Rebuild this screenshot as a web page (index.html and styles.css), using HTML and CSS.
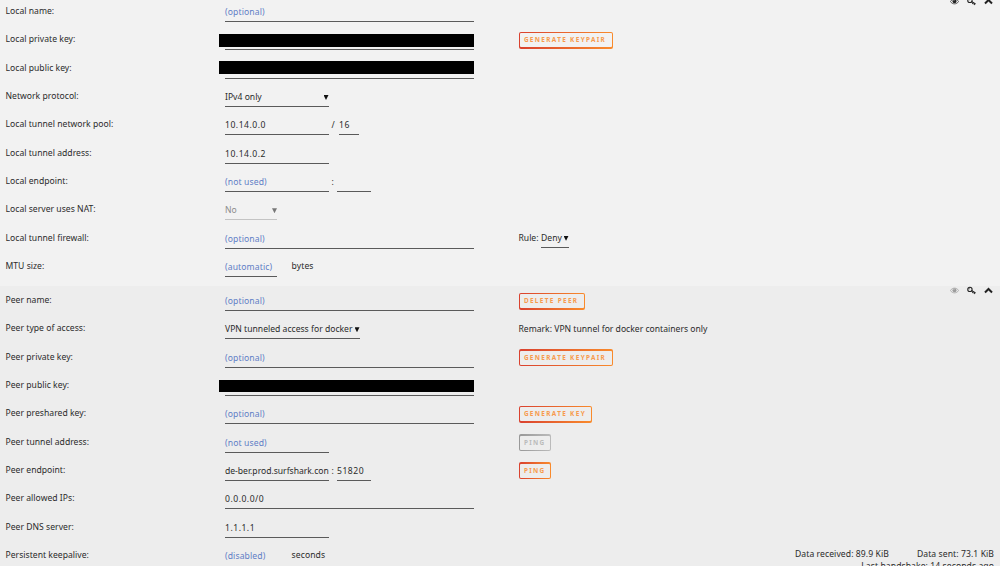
FILE: index.html
```
<!DOCTYPE html>
<html lang="en">
<head>
<meta charset="UTF-8">
<meta name="viewport" content="width=device-width, initial-scale=1.0">
<title>VPN Manager</title>
<link rel="stylesheet" href="styles.css">
</head>
<body>
    <svg class="defs" width="0" height="0">
        <symbol id="eye" viewBox="0 0 20 14">
            <path d="M1 7C5 0 15 0 19 7C15 14 5 14 1 7Z" fill="none" stroke="currentColor" stroke-width="1.6"/>
            <circle cx="10" cy="6.5" r="4.4" fill="currentColor"/>
            <path d="M8 6A2 2 0 0 1 10 4" fill="none" stroke="#eee" stroke-width="1"/>
        </symbol>
        <symbol id="key" viewBox="0 0 20 18">
            <circle cx="6.5" cy="6.5" r="4.8" fill="none" stroke="currentColor" stroke-width="2.4"/>
            <circle cx="4.8" cy="5" r="1.2" fill="currentColor"/>
            <path d="M10 9L19 14.5M14 11.5L12 14.5M17.5 13.5L15.5 17" fill="none" stroke="currentColor" stroke-width="2.4"/>
        </symbol>
        <symbol id="chevron" viewBox="0 0 18 14">
            <path d="M2 11L9 4L16 11" fill="none" stroke="currentColor" stroke-width="4"/>
        </symbol>
    </svg>

    <section class="local">
        <div class="icons">
            <svg class="eye"><use href="#eye"/></svg>
            <svg class="key"><use href="#key"/></svg>
            <svg class="chevron"><use href="#chevron"/></svg>
        </div>
        <div class="row">
            <label>Local name:</label>
            <div><span class="input wide empty">(optional)</span></div>
        </div>
        <div class="row">
            <label>Local private key:</label>
            <div class="secret private"><span class="input wide"></span></div>
            <div><button class="w-keypair"><span>GENERATE KEYPAIR</span></button></div>
        </div>
        <div class="row">
            <label>Local public key:</label>
            <div class="secret public"><span class="input wide"></span></div>
        </div>
        <div class="row">
            <label>Network protocol:</label>
            <div><span class="select mid">IPv4 only<i></i></span></div>
        </div>
        <div class="row">
            <label>Local tunnel network pool:</label>
            <div><span class="input mid num">10.14.0.0</span><span class="sep slash">/</span><span class="input mask num">16</span></div>
        </div>
        <div class="row">
            <label>Local tunnel address:</label>
            <div><span class="input mid num">10.14.0.2</span></div>
        </div>
        <div class="row">
            <label>Local endpoint:</label>
            <div><span class="input mid empty">(not used)</span><span class="sep">:</span><span class="input port"></span></div>
        </div>
        <div class="row">
            <label>Local server uses NAT:</label>
            <div><span class="select small disabled">No<i></i></span></div>
        </div>
        <div class="row">
            <label>Local tunnel firewall:</label>
            <div><span class="input wide empty">(optional)</span></div>
            <div class="rule"><span>Rule:</span><span class="select deny">Deny<i></i></span></div>
        </div>
        <div class="row">
            <label>MTU size:</label>
            <div><span class="input small empty">(automatic)</span><span class="unit">bytes</span></div>
        </div>
    </section>

    <section class="peer">
        <div class="icons">
            <svg class="eye off"><use href="#eye"/></svg>
            <svg class="key"><use href="#key"/></svg>
            <svg class="chevron"><use href="#chevron"/></svg>
        </div>
        <div class="row">
            <label>Peer name:</label>
            <div><span class="input wide empty">(optional)</span></div>
            <div><button class="w-delete"><span>DELETE PEER</span></button></div>
        </div>
        <div class="row">
            <label>Peer type of access:</label>
            <div><span class="select access">VPN tunneled access for docker<i></i></span></div>
            <div class="remark">Remark: VPN tunnel for docker containers only</div>
        </div>
        <div class="row">
            <label>Peer private key:</label>
            <div><span class="input wide empty">(optional)</span></div>
            <div><button class="w-keypair"><span>GENERATE KEYPAIR</span></button></div>
        </div>
        <div class="row">
            <label>Peer public key:</label>
            <div class="secret"><span class="input wide"></span></div>
        </div>
        <div class="row">
            <label>Peer preshared key:</label>
            <div><span class="input wide empty">(optional)</span></div>
            <div><button class="w-key"><span>GENERATE KEY</span></button></div>
        </div>
        <div class="row">
            <label>Peer tunnel address:</label>
            <div><span class="input mid empty">(not used)</span></div>
            <div><button class="w-ping" disabled><span>PING</span></button></div>
        </div>
        <div class="row">
            <label>Peer endpoint:</label>
            <div><span class="input mid host">de-ber.prod.surfshark.con</span><span class="sep">:</span><span class="input port num">51820</span></div>
            <div><button class="w-ping"><span>PING</span></button></div>
        </div>
        <div class="row">
            <label>Peer allowed IPs:</label>
            <div><span class="input wide num">0.0.0.0/0</span></div>
        </div>
        <div class="row">
            <label>Peer DNS server:</label>
            <div><span class="input mid num">1.1.1.1</span></div>
        </div>
        <div class="row keepalive">
            <label>Persistent keepalive:</label>
            <div><span class="input small empty">(disabled)</span><span class="unit">seconds</span></div>
            <div class="stats">
                <div><span>Data received: 89.9 KiB</span><span>Data sent: 73.1 KiB</span></div>
                <div>Last handshake: 14 seconds ago</div>
            </div>
        </div>
    </section>
</body>
</html>
```
FILE: styles.css
```
:root {
    --text: #2b2b2b;
    --line: #5a5a5a;
    --placeholder: #5f7ec6;
    --orange: #f79a4c;
    --row: 28.34px;
}
* {
    box-sizing: border-box;
}
body {
    margin: 0;
    height: 566px;
    overflow: hidden;
    background: #f2f2f2;
    color: var(--text);
    font-family: "Noto Sans", sans-serif;
    font-size: 8.6px;
    letter-spacing: 0;
    line-height: 12px;
    white-space: nowrap;
}
.defs {
    position: absolute;
}
section {
    position: relative;
}
.local {
    margin-top: -3px;
    height: 289px;
}
.peer {
    height: 290px;
    background: #ededed;
}
.row {
    display: grid;
    grid-template-columns: 219px 294px 1fr;
    height: var(--row);
    padding-left: 5.5px;
}
.row > label {
    padding-top: 8px;
    letter-spacing: 0.02px;
}
.row > div {
    display: flex;
    align-items: flex-start;
}
.input, .select {
    height: 25px;
    padding-top: 9px;
    padding-left: 0.5px;
    border-bottom: 1px solid var(--line);
}
.keepalive .input {
    height: 28px;
}
.empty {
    color: var(--placeholder);
    letter-spacing: 0.12px;
}
.num {
    letter-spacing: 0.5px;
}
.host {
    letter-spacing: -0.02px;
}
.wide { width: 249.5px; }
.mid { width: 104px; }
.small { width: 52.5px; }
.mask { width: 20.5px; }
.port { width: 34.5px; }
.deny { width: 28px; }
.access { width: 135px; }
.select {
    display: flex;
    justify-content: space-between;
}
.select i {
    width: 5px;
    height: 5px;
    margin-top: 4px;
    background: #111;
    clip-path: polygon(0 0, 100% 0, 50% 100%);
}
.disabled {
    color: #8c8c8c;
    border-color: #c4c4c4;
}
.select.disabled i {
    background: #777;
}
.sep {
    width: 8px;
    padding: 9px 0 0 3px;
}
.slash {
    width: 10px;
}
.unit {
    padding: 8px 0 0 14.5px;
    letter-spacing: 0.1px;
}
.rule span:first-child {
    padding-top: 8px;
    margin-right: 2px;
}
.rule .select {
    padding-top: 8px;
    height: 24px;
}
.remark {
    padding-top: 9px;
}

/* blacked out key */
.secret {
    position: relative;
}
.secret::after {
    content: "";
    position: absolute;
    left: -5.5px;
    top: 9px;
    width: 255px;
    height: 12.5px;
    background: #000;
}
.private::after { top: 8.7px; }
.public::after { top: 7.4px; }

button {
    height: 17px;
    margin-top: 6.5px;
    padding: 1.4px;
    border: none;
    border-radius: 2px;
    background: linear-gradient(90deg, #d9412f, #f98b2c);
    color: var(--orange);
    font: bold 6.4px/14px "Noto Sans", sans-serif;
    letter-spacing: 1.35px;
}
button span {
    display: block;
    height: 100%;
    padding-left: 4px;
    border-radius: 1px;
    background: #f2f2f2;
    text-align: left;
}
.peer button span {
    background: #ededed;
}
button:disabled {
    background: linear-gradient(90deg, #989898, #bbb);
    color: #bbb;
}
.w-keypair { width: 94.5px; }
.w-delete { width: 66.5px; }
.w-key { width: 73.5px; }
.w-ping { width: 32.5px; }

.icons {
    position: absolute;
    top: 0;
    right: 7px;
    display: flex;
    align-items: center;
    gap: 8px;
    height: 9px;
    color: #222;
}
.icons svg {
    width: 9px;
    height: 9px;
}
.off {
    opacity: 0.4;
}

.row > .stats {
    flex-direction: column;
    align-items: flex-end;
    padding: 7px 6px 0 0;
    letter-spacing: 0.08px;
}
.stats span + span {
    margin-left: 28px;
}
```
